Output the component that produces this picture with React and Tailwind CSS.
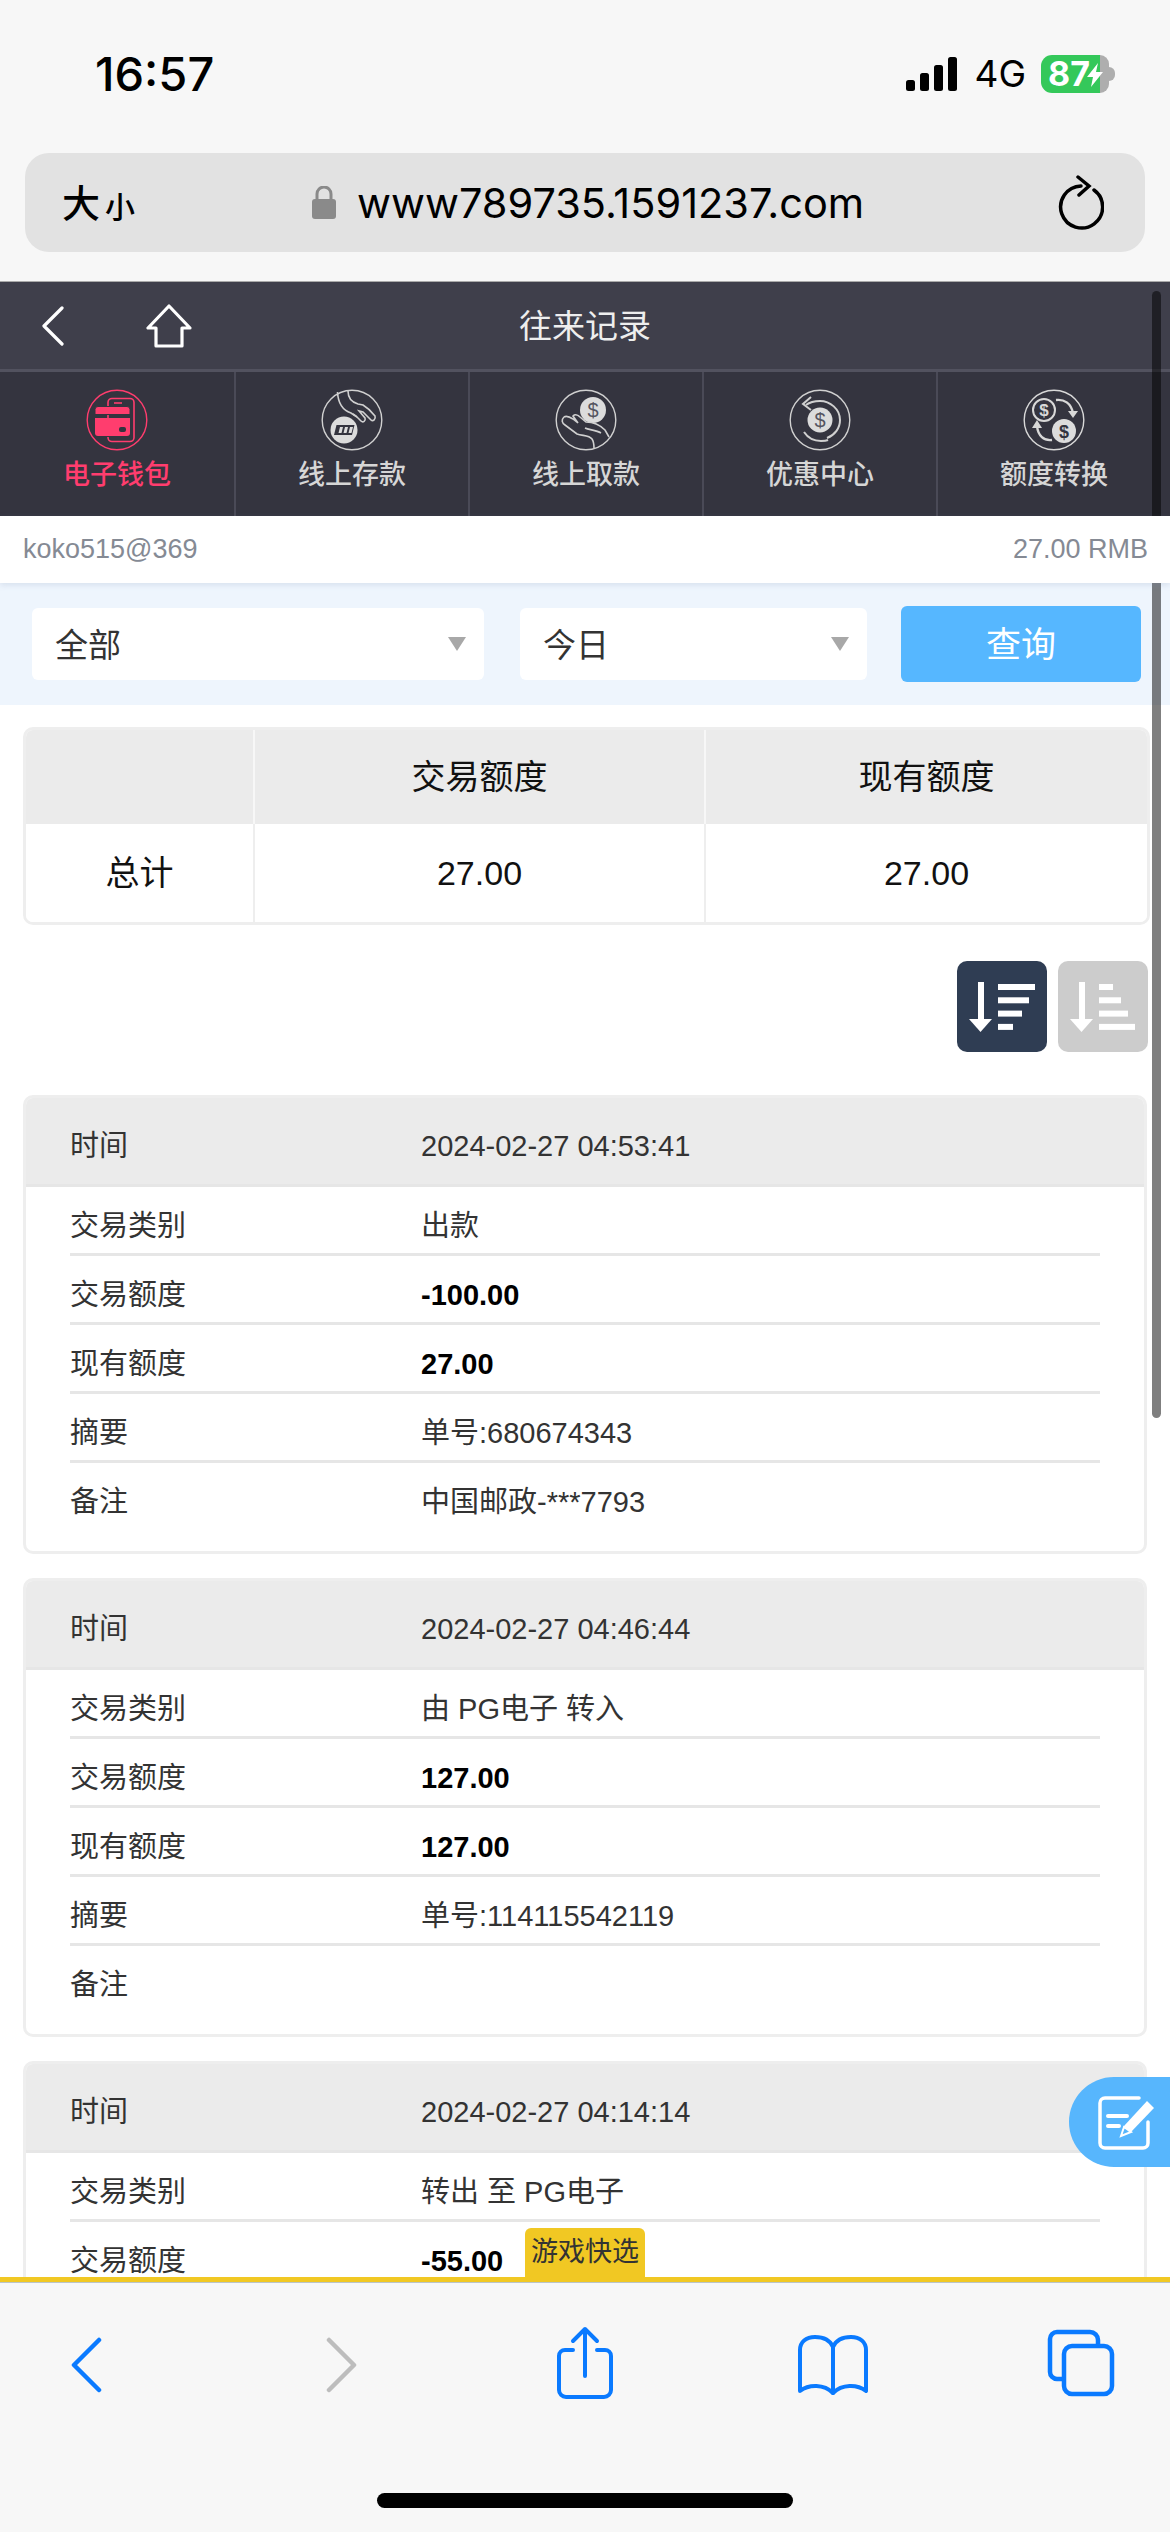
import React from 'react';

const tabs = [
  { label: '电子钱包', icon: WalletIcon, active: true },
  { label: '线上存款', icon: DepositIcon },
  { label: '线上取款', icon: WithdrawIcon },
  { label: '优惠中心', icon: PromoIcon },
  { label: '额度转换', icon: ExchangeIcon },
];

const records = [
  { time: '2024-02-27 04:53:41', type: '出款', amount: '-100.00', balance: '27.00', memo: '单号:680674343', note: '中国邮政-***7793' },
  { time: '2024-02-27 04:46:44', type: '由 PG电子 转入', amount: '127.00', balance: '127.00', memo: '单号:114115542119', note: '' },
  // 第三张只露出上半部分
  { time: '2024-02-27 04:14:14', type: '转出 至 PG电子', amount: '-55.00', partial: true },
];

function WalletIcon() {
  return (
    <svg width="62" height="62" viewBox="0 0 62 62" fill="none">
      <circle cx="31" cy="31" r="29.8" stroke="#ff3d6e" strokeWidth="1.4" />
      <rect x="22" y="9.5" width="26" height="43" rx="4" stroke="#ff3d6e" strokeWidth="1.6" />
      <path d="M28 14h8" stroke="#ff3d6e" strokeWidth="1.6" />
      <path d="M9 20.5a3 3 0 0 1 3-3h29a3 3 0 0 1 3 3v5H9z" fill="#ff3d6e" stroke="#34343f" strokeWidth="1" />
      <path d="M9 29h35v15a3 3 0 0 1-3 3H12a3 3 0 0 1-3-3z" fill="#ff3d6e" />
      <path d="M8 47.5h37" stroke="#34343f" strokeWidth="1" />
      <rect x="33" y="38" width="7" height="5" rx="2" fill="#34343f" />
    </svg>
  );
}

function DepositIcon() {
  return (
    <svg width="62" height="62" viewBox="0 0 62 62" fill="none" stroke="#d0d0d0">
      <circle cx="31" cy="31" r="29.8" strokeWidth="1.4" />
      <path d="M16.5 3C17 13 21 21 30 24l6 4" strokeWidth="1.6" />
      <path d="M27 2c0 7 3 11 10 13l5 1c5 3 9 7 12 11 1 3-2 6-4 4l-8-8-4-1 6 7c1 3-2 5-4 3l-5-5-3-2" strokeWidth="1.6" />
      <circle cx="23" cy="41" r="13.5" fill="#dcdcdc" stroke="none" />
      <path d="M15.5 36h18l-2.5 10H13z" fill="#34343f" stroke="none" />
      <path d="M19 38h3l-1.5 6h-3zM24 38h3l-1.5 6h-3zM29 38h3l-1.5 6h-3z" fill="#dcdcdc" stroke="none" />
    </svg>
  );
}

function WithdrawIcon() {
  return (
    <svg width="62" height="62" viewBox="0 0 62 62" fill="none" stroke="#d0d0d0">
      <circle cx="31" cy="31" r="29.8" strokeWidth="1.4" />
      <circle cx="38" cy="21" r="13" fill="#dcdcdc" stroke="none" />
      <text x="38" y="28" textAnchor="middle" fontSize="20" fill="#55555f" stroke="none" fontFamily="Liberation Sans, sans-serif">$</text>
      <path d="M9 28c3-2 6 0 9 2l5 4-5-7c2-2 5-1 7 1l6 5c8 0 14 3 19 8l4 7" strokeWidth="1.6" />
      <path d="M9 28c-3 3-2 6 1 8l12 9c6 2 12 1 15 5 2 3 2 6 2 9" strokeWidth="1.6" />
      <path d="M30 39c4 2 11 2 16 5" strokeWidth="1.6" />
    </svg>
  );
}

function PromoIcon() {
  return (
    <svg width="62" height="62" viewBox="0 0 62 62" fill="none" stroke="#d0d0d0">
      <circle cx="31" cy="31" r="29.8" strokeWidth="1.4" />
      <circle cx="31" cy="31" r="12.5" fill="#dcdcdc" stroke="none" />
      <text x="31" y="38" textAnchor="middle" fontSize="20" fill="#55555f" stroke="none" fontFamily="Liberation Sans, sans-serif">$</text>
      <path d="M17 16c4-3 9-4 14-4 10 0 20 8 20 19 0 8-5 15-13 18" strokeWidth="2" />
      <path d="M15 43c4 6 10 9 17 9 3 0 5 0 7-1" strokeWidth="2" />
      <path d="M22 8 14 15l8 6" strokeWidth="2" />
    </svg>
  );
}

function ExchangeIcon() {
  return (
    <svg width="62" height="62" viewBox="0 0 62 62" fill="none" stroke="#d8d8d8">
      <circle cx="31" cy="31" r="29.8" strokeWidth="1.4" />
      <circle cx="21" cy="21" r="11" strokeWidth="2" />
      <text x="21" y="27" textAnchor="middle" fontSize="17" fill="#d8d8d8" stroke="none" fontWeight="700" fontFamily="Liberation Sans, sans-serif">$</text>
      <circle cx="41" cy="42" r="12" fill="#dcdcdc" stroke="none" />
      <text x="41" y="48.5" textAnchor="middle" fontSize="18" fill="#34343f" stroke="none" fontWeight="700" fontFamily="Liberation Sans, sans-serif">$</text>
      <path d="M33 11c8-1 15 3 17 13" strokeWidth="2.4" />
      <path d="M45 22h10l-5 7z" fill="#d8d8d8" stroke="none" />
      <path d="M29 51c-8 1-14-4-15-14" strokeWidth="2.4" />
      <path d="M9 39l5-8 5 8z" fill="#d8d8d8" stroke="none" />
    </svg>
  );
}

function SortIcon({ widths, bg }) {
  return (
    <div className={`w-[90px] h-[91px] rounded-[10px] ${bg}`}>
      <svg width="90" height="91" viewBox="0 0 90 91" fill="#fff" className="blur-[0.6px]">
        <rect x="21" y="21" width="6" height="38" />
        <path d="M12 58h23L23.5 71z" />
        {widths.map((w, i) => (
          <rect key={i} x="41" y={23 + i * 13.3} width={w} height="6" />
        ))}
      </svg>
    </div>
  );
}

function Row({ label, last, children }) {
  return (
    <div className={last ? 'h-[88px] pb-[11px] flex items-center' : 'h-[69px] pt-[12px] flex items-center border-b-[3px] border-[#e6e6e6]'}>
      <div className="w-[351px] text-[#333]">{label}</div>
      <div className="text-[#333]">{children}</div>
    </div>
  );
}

function RecordCard({ record }) {
  return (
    <div className="border-[3px] border-[#eeeeee] rounded-[10px] overflow-hidden text-[29px] leading-[30px] shrink-0">
      <div className="h-[89px] pt-[10px] bg-[#ebebeb] border-b-[3px] border-[#e6e6e6] px-[44px] flex items-center">
        <div className="w-[351px] text-[#333]">时间</div>
        <div className="text-[#333]">{record.time}</div>
      </div>
      <div className="px-[44px]">
        <Row label="交易类别">{record.type}</Row>
        <Row label="交易额度"><b className="text-black">{record.amount}</b></Row>
        {!record.partial && (
          <>
            <Row label="现有额度"><b className="text-black">{record.balance}</b></Row>
            <Row label="摘要">{record.memo}</Row>
            <Row label="备注" last>{record.note}</Row>
          </>
        )}
      </div>
    </div>
  );
}

function StatusBar() {
  return (
    <div className="h-[153px] flex items-start justify-between font-['Inter','Noto_Sans_CJK_SC',sans-serif]">
      <div className="ml-[95px] mt-[47px] text-[47px] leading-[54px] font-medium text-black">16:57</div>
      <div className="flex items-start mr-[55px] mt-[55px]">
        <svg width="52" height="36" viewBox="0 0 52 36" fill="#000" className="mt-[1px]">
          <rect x="0" y="24" width="9" height="11" rx="2.5" />
          <rect x="14" y="17" width="9" height="18" rx="2.5" />
          <rect x="28" y="9" width="9" height="26" rx="2.5" />
          <rect x="42" y="1" width="9" height="34" rx="2.5" />
        </svg>
        <div className="ml-[16px] text-[37px] leading-[42px] text-black mt-[-2px]">4G</div>
        <div className="relative ml-[15px] flex w-[68px] h-[38px]">
          <div className="w-[59px] bg-[#34c85a] rounded-l-[11px]" />
          <div className="w-[9px] bg-[#aeaeae] rounded-r-[11px]" />
          <span className="absolute left-[7px] top-0 text-[34px] leading-[38px] font-bold text-white">87</span>
          <svg className="absolute left-[46px] top-[8px]" width="16" height="24" viewBox="0 0 16 24" fill="#fff">
            <path d="M11 0 0 14h6l-2 10L16 9H9z" />
          </svg>
        </div>
        <div className="w-[6px] h-[14px] mt-[12px] bg-[#aeaeae] rounded-r-full" />
      </div>
    </div>
  );
}

function UrlBar() {
  return (
    <div className="mx-[25px] h-[99px] bg-[#e2e2e2] rounded-[24px] flex items-center font-['Inter','Noto_Sans_CJK_SC',sans-serif]">
      <div className="ml-[37px] w-[75px] flex items-end text-black font-medium">
        <span className="text-[38px] leading-[44px]">大</span>
        <span className="text-[30px] leading-[36px] ml-[5px]">小</span>
      </div>
      <svg className="ml-[175px]" width="24" height="33" viewBox="0 0 24 33" fill="#8a8a8a">
        <path d="M5 14V8a7 7 0 0 1 14 0v6" fill="none" stroke="#8a8a8a" strokeWidth="3" />
        <rect x="0" y="13" width="24" height="20" rx="3" />
      </svg>
      <div className="ml-[21px] text-[41.5px] leading-[50px] text-black">www789735.1591237.com</div>
      <svg className="ml-auto mr-[41px]" width="46" height="55" viewBox="0 0 46 55" fill="none" stroke="#000" strokeWidth="3.5" strokeLinecap="round">
        <path d="M36 15a21 21 0 1 1-13-4" />
        <path d="M20 2l11 9-10 9" />
      </svg>
    </div>
  );
}

function BottomBar() {
  return (
    <div className="h-[250px] bg-[#f7f7f7] shrink-0 relative border-t border-[#b9c4c9]">
      <div className="flex items-start pt-[43px] pl-[70px]">
        <svg className="mt-[11px]" width="32" height="56" viewBox="0 0 32 56" fill="none" stroke="#0a7aff" strokeWidth="4.5" strokeLinecap="round" strokeLinejoin="round">
          <path d="M29 3 4 28l25 25" />
        </svg>
        <svg className="mt-[11px] ml-[224px]" width="32" height="56" viewBox="0 0 32 56" fill="none" stroke="#bdbdbd" strokeWidth="4.5" strokeLinecap="round" strokeLinejoin="round">
          <path d="M3 3l25 25L3 53" />
        </svg>
        <svg className="ml-[198px]" width="58" height="74" viewBox="0 0 58 74" fill="none" stroke="#0a7aff" strokeWidth="4" strokeLinecap="round" strokeLinejoin="round">
          <path d="M29 50V3M17 15 29 3l12 12" />
          <path d="M17 24H9a6 6 0 0 0-6 6v34a7 7 0 0 0 7 7h38a7 7 0 0 0 7-7V30a6 6 0 0 0-6-6h-8" />
        </svg>
        <svg className="ml-[183px] mt-[9px]" width="72" height="60" viewBox="0 0 72 60" fill="none" stroke="#0a7aff" strokeWidth="4" strokeLinecap="round" strokeLinejoin="round">
          <path d="M36 12C33 5 26 2 18 2 9 2 3 7 3 15v41c9-7 24-7 33 2 9-9 24-9 33-2V15c0-8-6-13-15-13-8 0-15 3-18 10z" />
          <path d="M36 12v46" />
        </svg>
        <svg className="ml-[178px] mt-[3px]" width="68" height="68" viewBox="0 0 68 68" fill="none" stroke="#0a7aff" strokeWidth="4.5" strokeLinejoin="round">
          <path d="M16 50H10a7 7 0 0 1-7-7V10a7 7 0 0 1 7-7h33a8 8 0 0 1 8 8v5" />
          <rect x="17" y="17" width="48" height="48" rx="8" />
        </svg>
      </div>
      <div className="absolute left-[377px] top-[210px] w-[416px] h-[15px] rounded-full bg-black" />
    </div>
  );
}

export default function App() {
  return (
    <div className="relative w-[1170px] h-[2532px] overflow-hidden bg-[#f7f7f7] flex flex-col font-['Liberation_Sans','Noto_Sans_CJK_SC',sans-serif]">
      <StatusBar />
      <UrlBar />
      <div className="h-[29px] shrink-0" />

      <div className="h-px bg-[#aaaaaa] shrink-0" />
      <div className="h-[87px] shrink-0 bg-[#3f3f4b] grid grid-cols-[1fr_auto_1fr] items-center">
        <div className="flex items-center pl-[41px]">
          <svg width="24" height="40" viewBox="0 0 24 40" fill="none" stroke="#fff" strokeWidth="3.2" strokeLinecap="round" strokeLinejoin="round">
            <path d="M21 2 3 20l18 18" />
          </svg>
          <svg className="ml-[81px]" width="46" height="44" viewBox="0 0 46 44" fill="none" stroke="#fff" strokeWidth="3.2" strokeLinejoin="round">
            <path d="M23 2 2 24h8v18h26V24h8z" />
          </svg>
        </div>
        <div className="text-[33px] leading-[40px] pt-[3px] text-[#eeeeee]">往来记录</div>
        <div />
      </div>
      <div className="h-[3px] bg-[#52525f] shrink-0" />

      <div className="h-[144px] shrink-0 bg-[#34343f] flex">
        {tabs.map((t, i) => (
          <div key={t.label} className={`w-[234px] flex flex-col items-center pt-[17px] ${i > 0 ? 'border-l-2 border-[#4a4a57]' : ''}`}>
            <t.icon />
            <div className={`mt-[6px] text-[27px] leading-[36px] font-medium ${t.active ? 'text-[#ff3d6e]' : 'text-[#d6d6d6]'}`}>{t.label}</div>
          </div>
        ))}
      </div>

      <div className="relative z-10 h-[67px] shrink-0 bg-white pl-[23px] pr-[22px] flex items-center justify-between text-[27px] text-[#858a94] shadow-[0_2px_6px_rgba(120,140,170,0.2)]">
        <span>koko515@369</span>
        <span>27.00 RMB</span>
      </div>

      <div className="h-[122px] shrink-0 bg-[#eef5fd] flex items-center pl-[32px]">
        <div className="w-[452px] h-[72px] bg-white rounded-[6px] flex items-center justify-between pl-[23px] pr-[18px] text-[33px] text-[#333]">
          <span className="pt-[3px]">全部</span>
          <div className="w-0 h-0 border-x-[9px] border-x-transparent border-t-[14px] border-t-[#a8a8a8]" />
        </div>
        <div className="ml-[36px] w-[347px] h-[72px] bg-white rounded-[6px] flex items-center justify-between pl-[23px] pr-[18px] text-[33px] text-[#333]">
          <span className="pt-[3px]">今日</span>
          <div className="w-0 h-0 border-x-[9px] border-x-transparent border-t-[14px] border-t-[#a8a8a8]" />
        </div>
        <div className="ml-[34px] w-[240px] h-[76px] pt-[3px] bg-[#56b7ff] rounded-[6px] flex items-center justify-center text-[35px] text-white">查询</div>
      </div>

      <div className="flex-1 min-h-0 relative overflow-hidden bg-white px-[23px] pt-[22px] flex flex-col">
        <div className="border-[3px] border-[#eeeeee] rounded-[10px] overflow-hidden text-[34px] text-[#111] mr-[-3px] shrink-0">
          <div className="h-[94px] bg-[#ebebeb] grid grid-cols-[229px_451px_1fr]">
            <div className="border-r-2 border-[#f7f7f7]" />
            <div className="border-r-2 border-[#f7f7f7] flex items-center justify-center">交易额度</div>
            <div className="flex items-center justify-center">现有额度</div>
          </div>
          <div className="h-[98px] bg-white grid grid-cols-[229px_451px_1fr]">
            <div className="border-r-2 border-[#eeeeee] flex items-center justify-center">总计</div>
            <div className="border-r-2 border-[#eeeeee] flex items-center justify-center">27.00</div>
            <div className="flex items-center justify-center">27.00</div>
          </div>
        </div>

        <div className="mt-[36px] flex justify-end gap-[11px] mr-[-1px] shrink-0">
          <SortIcon widths={[37, 31, 24, 15]} bg="bg-[#2f3d53]" />
          <SortIcon widths={[14, 22, 29, 36]} bg="bg-[#cccccc]" />
        </div>

        <div className="mt-[43px] flex flex-col gap-[24px]">
          {records.map((r) => (
            <RecordCard key={r.time} record={r} />
          ))}
        </div>

        <div className="absolute left-[525px] bottom-0 w-[120px] h-[49px] bg-[#f1c823] rounded-t-[6px] flex items-start justify-center text-[27px] leading-[48px] text-[#333]">游戏快选</div>
      </div>

      <div className="h-[5px] bg-[#f1c823] shrink-0" />
      <BottomBar />

      {/* 滚动条 */}
      <div className="absolute left-[1152px] top-[291px] w-[9px] h-[1127px] rounded-full bg-black/50" />

      <div className="absolute left-[1069px] top-[2077px] w-[101px] h-[90px] rounded-l-[45px] bg-[#57b6fd] flex items-center">
        <svg className="ml-[28px]" width="60" height="60" viewBox="0 0 60 60" fill="none" stroke="#fff" strokeWidth="3.5" strokeLinecap="round">
          <path d="M42 6H8a5 5 0 0 0-5 5v40a5 5 0 0 0 5 5h38a5 5 0 0 0 5-5V30" />
          <path d="M11 24h19M11 34h11" strokeWidth="4" />
          <path d="M24 44 27 34 50 9l7 7-23 24z" fill="#fff" stroke="none" />
          <path d="M24 44l3-9 7 5z" fill="#57b6fd" stroke="#fff" strokeWidth="2" />
        </svg>
      </div>
    </div>
  );
}
